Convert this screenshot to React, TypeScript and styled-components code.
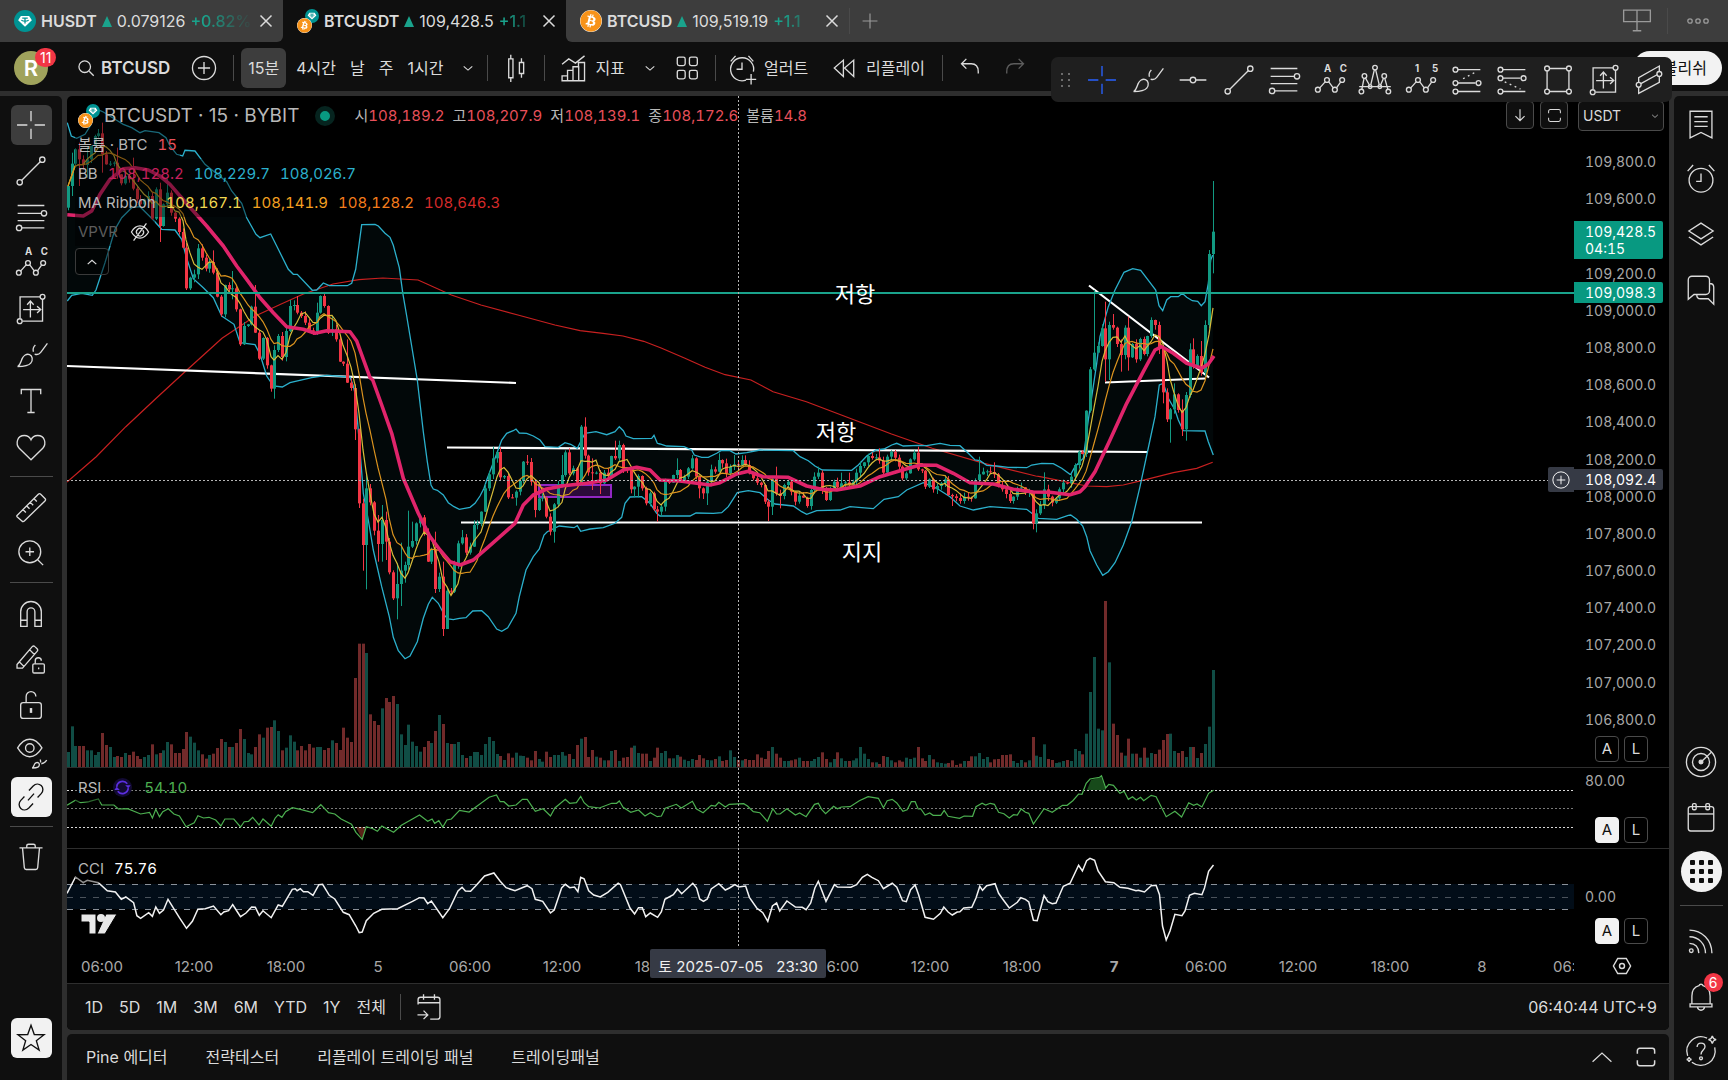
import React from "react";
import styled, { createGlobalStyle, css } from "styled-components";
import { FaBitcoin } from "react-icons/fa6";

const c = {
  tabStrip: "#3d3d3d",
  panel: "#0f0f0f",
  gutter: "#2e2e2e",
  line: "#2e2e2e",
  rule: "#4a4a4a",
  text: "#dbdbdb",
  muted: "#a8a8a8",
  up: "#089981",
  upLine: "#1aa38c",
  down: "#f23645",
  red: "#e8505b",
  cyan: "#2bb0cc",
  badge: "#f23645",
  tip: "#363a45",
};

const GlobalStyle = createGlobalStyle`
  * { box-sizing: border-box; }
  body {
    margin: 0;
    background: ${c.panel};
    color: ${c.text};
    font-family: Inter, "Noto Sans CJK KR", sans-serif;
    font-size: 16px;
    line-height: 20px;
  }
  button, select { font: inherit; color: inherit; }
`;

/* ---------- icons ---------- */

const Svg = styled.svg<{ $size?: number }>`
  width: ${(p) => p.$size ?? 34}px;
  height: ${(p) => p.$size ?? 34}px;
  flex: none;
  display: block;
  fill: none;
  stroke: currentColor;
  stroke-width: 1.1;
  overflow: visible;
`;

const IconLetter = styled.text`
  font: 700 8px Inter, sans-serif;
  fill: currentColor;
  stroke: none;
`;

const icons: Record<string, React.ReactNode> = {
  cross: <path d="M14 2.5V11M14 17v8.5M2.5 14H11M17 14h8.5" />,
  brush: (
    <path d="M3 23.5c2-1 2.6-4 3.7-6.5s3.6-4.3 6.1-3.3 3 4.5 1 7-7.3 2.8-10.8 2.8zM16 11.3c-.7-2.3.2-4.3 1.6-5.6M17 13.2c2.4 1 3.9 0 5-1.4L27.5 4.5" />
  ),
  hline: (
    <>
      <path d="M3 14h8.5M16.5 14H25" />
      <circle cx="14" cy="14" r="2.3" />
    </>
  ),
  trend: (
    <>
      <path d="M6.2 21.8L21.8 6.2" />
      <circle cx="4.7" cy="23.3" r="2.2" />
      <circle cx="23.3" cy="4.7" r="2.2" />
    </>
  ),
  fib: (
    <>
      <path d="M3 4.5h22M3 11h19.5M3 17h22M6.5 23H25" />
      <circle cx="24.7" cy="11" r="2.2" />
      <circle cx="4.2" cy="23" r="2.2" />
    </>
  ),
  abc: (
    <>
      <path d="M5.4 20.7l4.6-5.2M13 15.5l3.5 4.7M19.5 20.2l3.2-4.5" />
      <circle cx="4" cy="22" r="2" />
      <circle cx="11.5" cy="14" r="2" />
      <circle cx="18" cy="22" r="2" />
      <circle cx="24" cy="14" r="2" />
      <IconLetter x="9" y="7">A</IconLetter>
      <IconLetter x="22" y="7">C</IconLetter>
    </>
  ),
  elliott: (
    <>
      <path d="M5.4 20.7l4.6-5.2M13 15.5l3.5 4.7M19.5 20.2l3.2-4.5" />
      <circle cx="4" cy="22" r="2" />
      <circle cx="11.5" cy="14" r="2" />
      <circle cx="18" cy="22" r="2" />
      <circle cx="24" cy="14" r="2" />
      <IconLetter x="9" y="7">1</IconLetter>
      <IconLetter x="23" y="7">5</IconLetter>
    </>
  ),
  xabcd: (
    <>
      <path d="M3.2 21.5L5 12.5M6 12l3.6 6.5M10.5 18L13.5 5.5M14.5 5.5L17.5 18M18.4 18.5l2.6-6M22 12.5l2.5 9M1 19.5h26" />
      <circle cx="14" cy="3.8" r="1.9" />
      <circle cx="5.3" cy="10.7" r="1.9" />
      <circle cx="21.6" cy="10.7" r="1.9" />
      <circle cx="2.8" cy="23.5" r="1.9" />
      <circle cx="25" cy="23.5" r="1.9" />
      <circle cx="10" cy="19.5" r="1.5" />
      <circle cx="18" cy="19.5" r="1.5" />
    </>
  ),
  longPos: (
    <>
      <path d="M6.5 5.5H25M6.5 16.5h14.5M6.5 23.5H25" />
      <path d="M20 8l-12 6.5" strokeDasharray="1.5 3" />
      <circle cx="4.5" cy="5.5" r="2" />
      <circle cx="4.5" cy="16.5" r="2" />
      <circle cx="23.5" cy="16.5" r="2" />
      <circle cx="4.5" cy="23.5" r="2" />
    </>
  ),
  shortPos: (
    <>
      <path d="M6.5 5.5H25M6.5 12.5h14.5M6.5 23.5H25" />
      <path d="M8 15.5l13 6" strokeDasharray="1.5 3" />
      <circle cx="4.5" cy="5.5" r="2" />
      <circle cx="4.5" cy="12.5" r="2" />
      <circle cx="23.5" cy="12.5" r="2" />
      <circle cx="4.5" cy="23.5" r="2" />
    </>
  ),
  rect: (
    <>
      <path d="M7 4.5h14M7 23.5h14M5 6.5v15M23 6.5v15" />
      <circle cx="5" cy="4.5" r="2" />
      <circle cx="23" cy="4.5" r="2" />
      <circle cx="5" cy="23.5" r="2" />
      <circle cx="23" cy="23.5" r="2" />
    </>
  ),
  range: (
    <>
      <path d="M21.5 4H5v17.5M7 24h16.5V6M13.5 21V8M10.8 10.5l2.7-3 2.7 3M7.5 14.5h14M19 11.8l3 2.7-3 2.7" />
      <circle cx="23.5" cy="4" r="2" />
      <circle cx="4.7" cy="24" r="2" />
    </>
  ),
  channel: (
    <>
      <path d="M5.5 16V12L22.5 2.5V7M7.3 17L21 9.5M5.5 20v5l17-9v-5" />
      <circle cx="5.5" cy="18" r="2" />
      <circle cx="22.5" cy="9" r="2" />
    </>
  ),
  text: <path d="M6 8.5V4.5h16v4M14 4.5v19M11 23.5h6" />,
  heart: (
    <path d="M14 24.5L4.3 15C1 11.2 2.6 4.5 8.5 4.5c2.7 0 4.6 1.5 5.5 3.6.9-2.1 2.8-3.6 5.5-3.6 5.9 0 7.5 6.7 4.2 10.5z" />
  ),
  ruler: (
    <path d="M2.5 21L20 3.5c.7-.7 1.3-.7 2 0L25.5 7c.7.7.7 1.3 0 2L8.5 25.5c-.7.7-1.3.7-2 0L2.5 22c-.3-.3-.3-.7 0-1zM7.5 16.2l2.3 2.3M10.5 13.2l2.3 2.3M13.5 10.2l2.3 2.3M16.5 7.2l2.3 2.3" />
  ),
  zoom: (
    <>
      <circle cx="13" cy="13" r="9" />
      <path d="M13 9.5v7M9.5 13h7M19.5 19.5l4.5 4.5" />
    </>
  ),
  magnet: (
    <path d="M5.5 25V13a8.5 8.5 0 0 1 17 0v12h-5.3V13a3.2 3.2 0 0 0-6.4 0v12zM5.5 20h5.3M17.2 20h5.3" />
  ),
  pencilLock: (
    <>
      <path d="M2.5 18.5L15 3.8c.7-.7 1.5-.7 2.2 0l1.8 1.7c.7.7.7 1.5 0 2.2L7 21.5H2.5zM13 6.5l4 4M4.5 16.5l4 4" />
      <rect x="15.5" y="18" width="9.5" height="7.5" rx="1" />
      <path d="M17.5 18v-2.5a2.5 2.5 0 0 1 5 0M20.3 21v1.5" />
    </>
  ),
  lock: (
    <>
      <rect x="5.5" y="12" width="17" height="13" rx="2" />
      <path d="M10 12V7a4 4 0 0 1 8 0" />
      <path d="M14 16.5v4" strokeWidth="2" />
    </>
  ),
  eye: (
    <>
      <path d="M3 11.5C6 6.5 9.5 4.3 13 4.3s7 2.2 10 7.2c-3 5-6.5 7.2-10 7.2S6 16.5 3 11.5z" />
      <circle cx="13" cy="11.5" r="3.5" />
      <path d="M15 28c1-.5 1.3-2 2-3.3s2.3-1.6 3.3-.8.6 2.7-.6 3.4-3 .7-4.7.7zM22 23.5l-.3-2.5M22.5 24.5c2 0 3-1 4.5-3" />
    </>
  ),
  link: (
    <path d="M12.3 8.6l3.5-3.7c2-2 4.8-2 6.6-.3s1.9 4.6 0 6.6l-3 3.2M15.7 19.4l-3.5 3.7c-2 2-4.8 2-6.6.3s-1.9-4.6 0-6.6l3-3.2M16.5 11.2l-5 5.6" />
  ),
  trash: (
    <path d="M4.5 6.5h19M10.5 6.3V5c0-1 .5-1.5 1.5-1.5h4c1 0 1.5.5 1.5 1.5v1.3M7 6.5l1.5 16.3c.1 1 .6 1.5 1.5 1.5h8c.9 0 1.4-.5 1.5-1.5L21 6.5" />
  ),
  star: <path d="M14 3.5l2.7 7.6 8.1.2-6.4 5 2.3 7.7L14 19.4 7.3 24l2.3-7.7-6.4-5 8.1-.2z" />,
  search: (
    <>
      <circle cx="12" cy="12" r="9" strokeWidth="2" />
      <path d="M19 19l7 7" strokeWidth="2" />
    </>
  ),
  plusCircle: (
    <>
      <circle cx="14" cy="14" r="9.5" />
      <path d="M14 9v10M9 14h10" />
    </>
  ),
  chevDown: <path d="M4 10l10 9 10-9" strokeWidth="2.5" />,
  chevUp: <path d="M4 19l10-9 10 9" strokeWidth="3" />,
  chevWide: <path d="M2 20l12-11 12 11" strokeWidth="1.6" />,
  candles: (
    <path d="M8 6.5h3.5v15.5H8zM9.7 3v3.5M9.7 22v3.5M16.8 9.5h3.5v9h-3.5zM18.5 6v3.5M18.5 18.5V22" />
  ),
  indicators: (
    <path d="M5 11l5.5-4.5 5.5 3.5L23.5 4M5 24.5v-4h4.5v-4.5h4.5v-3h4.5v-3.5H23.5v15zM9.5 24.5v-5M14 24.5v-9M18.7 24.5v-12" />
  ),
  layouts: (
    <>
      <rect x="6" y="5" width="6.5" height="7" rx="1.5" />
      <rect x="16" y="5" width="6.5" height="7" rx="1.5" />
      <rect x="6" y="16" width="6.5" height="7" rx="1.5" />
      <rect x="16" y="16" width="6.5" height="7" rx="1.5" />
    </>
  ),
  alertAdd: (
    <path d="M17.3 24a9.5 9.5 0 1 1 6.1-7M14 9.5v5.5h-4.5M4.7 8.5l4-4.5M23.3 8.5l-4-4.5M21.5 19v8.5M17.2 23.3h8.5" />
  ),
  replay: <path d="M13.5 7.5v13.5L6 14zM22 7.5v13.5L14.5 14z" />,
  undo: <path d="M11 6.5L7 10.5l4 4M7.2 10.5H15c3.7 0 5.8 2.5 5.8 6.5v1.5" />,
  redo: <path d="M17 6.5l4 4-4 4M20.8 10.5H13c-3.7 0-5.8 2.5-5.8 6.5v1.5" />,
  close: <path d="M3 3l22 22M25 3L3 25" strokeWidth="3" />,
  plus: <path d="M14 1v26M1 14h26" strokeWidth="2" />,
  boards: <path d="M3 5h22v9.5H3zM14 5v17M10.5 22h7" />,
  more: (
    <>
      <circle cx="6" cy="14" r="2.2" strokeWidth="1.3" />
      <circle cx="14" cy="14" r="2.2" strokeWidth="1.3" />
      <circle cx="22" cy="14" r="2.2" strokeWidth="1.3" />
    </>
  ),
  watchlist: <path d="M5 3.5h18v22l-9-4.5-9 4.5zM8.5 8h11M8.5 12h11M8.5 16h11" />,
  alarm: (
    <>
      <circle cx="14" cy="15" r="9.8" />
      <path d="M14 9.5V16h-4M3 7.5l4.5-5M25 7.5l-4.5-5" />
    </>
  ),
  layers: <path d="M14 5l10 6.5L14 18 4 11.5zM4 16.5L14 23l10-6.5" />,
  chat: (
    <path d="M3.5 19.5v-13a3 3 0 0 1 3-3H18a3 3 0 0 1 3 3v9a3 3 0 0 1-3 3H8.2l-4.7 4zM21 9.5c2 0 3.5.7 3.5 3v14L20 22h-6.5c-2 0-3-1-3-3.3" />
  ),
  target: (
    <>
      <circle cx="14" cy="14" r="12" />
      <circle cx="14" cy="14" r="7" />
      <circle cx="14" cy="14" r="1.5" fill="currentColor" />
      <path d="M14 14l8.5-8" />
    </>
  ),
  calendar: (
    <>
      <rect x="3.5" y="5.5" width="21" height="20" rx="2" />
      <path d="M3.5 11.5h21" />
      <rect x="7" y="3" width="3" height="5" rx="1" />
      <rect x="18" y="3" width="3" height="5" rx="1" />
    </>
  ),
  rss: (
    <>
      <circle cx="6" cy="22" r="1.5" />
      <path d="M4.5 16c4.5.2 7.5 3 7.7 8M4.5 10.5c7.5.2 13 5.5 13.2 13.5M4.5 5c10.5.2 18.3 8 18.5 19" />
    </>
  ),
  bell: <path d="M6.5 20.5V14c0-4.5 2.5-7.5 5.8-8.5a1.8 1.8 0 0 1 3.4 0c3.3 1 5.8 4 5.8 8.5v6.5M5 20.5h18v2.5H5zM11 23c.3 1.7 1.3 2.7 3 2.7s2.7-1 3-2.7" />,
  help: (
    <>
      <path d="M19 3.4A11.8 11.8 0 0 0 3 18M6.5 23.2A11.8 11.8 0 0 0 25.3 11M10.8 10.8c0-2 1.4-3.3 3.2-3.3s3.3 1.2 3.3 3c0 2.7-3.3 2.8-3.3 6.3" />
      <circle cx="14" cy="20" r="1.2" />
      <path d="M23.3 1.5c.4 2 1.2 2.8 3.2 3.2-2 .4-2.8 1.2-3.2 3.2-.4-2-1.2-2.8-3.2-3.2 2-.4 2.8-1.2 3.2-3.2zM4.2 19c.2 1.3.8 1.8 2 2-1.2.2-1.8.8-2 2-.2-1.2-.8-1.8-2-2 1.2-.2 1.8-.7 2-2z" />
    </>
  ),
  gotoDate: (
    <path d="M5 12V8a2 2 0 0 1 2-2h14a2 2 0 0 1 2 2v14a2 2 0 0 1-2 2h-6M5 10.5h18M9.5 3.5V8M18.5 3.5V8M4.5 20.5h8M9.5 17l3.5 3.5L9.5 24" />
  ),
  arrowDown: <path d="M14 4v20M6 16l8 8 8-8" strokeWidth="2" />,
  maximize: <path d="M3 10V6a3 3 0 0 1 3-3h16a3 3 0 0 1 3 3v4M3 18v4a3 3 0 0 0 3 3h16a3 3 0 0 0 3-3v-4" strokeWidth="1.9" />,
  hidden: (
    <path d="M2 14c3.5-6 7.5-8.5 12-8.5S22.5 8 26 14c-3.5 6-7.5 8.5-12 8.5S5.5 20 2 14zM10 17a5 5 0 0 1 7-7M18 11.5a5 5 0 0 1-7 7M5 26L23 2" strokeWidth="1.8" />
  ),
  hex: (
    <>
      <path d="M8 3.5h12L26 14l-6 10.5H8L2 14z" strokeWidth="2" />
      <circle cx="14" cy="14" r="3.5" strokeWidth="2" />
    </>
  ),
  sync: (
    <>
      <circle cx="14" cy="14" r="14" fill="#120a33" stroke="none" />
      <path d="M5.5 13a8.6 8.6 0 0 1 15.5-4.5M22.5 15a8.6 8.6 0 0 1-15.5 4.5" strokeWidth="2.4" />
      <path d="M18 10.5h8l-3.5 4.5zM10 17.5H2l3.5-4.5z" fill="currentColor" stroke="none" />
    </>
  ),
};

const Icon = ({ name, size }: { name: string; size?: number }) => (
  <Svg viewBox="0 0 28 28" $size={size} aria-hidden="true">
    {icons[name]}
  </Svg>
);

/* ---------- coins ---------- */

const CoinDisc = styled.span<{ $size: number; $bg: string }>`
  display: block;
  flex: none;
  width: ${(p) => p.$size}px;
  height: ${(p) => p.$size}px;
  border-radius: 50%;
  overflow: hidden;
  background: ${(p) => p.$bg};
  color: #f7931a;
  & > svg { display: block; width: 100%; height: 100%; }
`;

const Tether = ({ size }: { size: number }) => (
  <CoinDisc $size={size} $bg="#009393">
    <svg viewBox="0 0 24 24">
      <path d="M7.5 6.5h9l3 4.7-7.5 7-7.5-7z" fill="#fff" />
      <path d="M9 8.8h6M12 8.8v6M8 11.2c2 1 6 1 8 0" stroke="#009393" strokeWidth="1.4" fill="none" />
    </svg>
  </CoinDisc>
);

const Bitcoin = ({ size }: { size: number }) => (
  <CoinDisc $size={size} $bg="#fff">
    <FaBitcoin />
  </CoinDisc>
);

const PairBox = styled.span`
  display: grid;
  flex: none;
  width: 22px;
  height: 24px;
  & > :first-child { grid-area: 1 / 1; justify-self: end; align-self: start; }
  & > :last-child { grid-area: 1 / 1; justify-self: start; align-self: end; }
`;

const Pair = () => (
  <PairBox>
    <Tether size={14} />
    <Bitcoin size={15} />
  </PairBox>
);

/* ---------- page frame ---------- */

const Page = styled.div`
  display: flex;
  flex-direction: column;
  min-height: 100vh;
  overflow: hidden;
`;

const bareButton = css`
  display: flex;
  align-items: center;
  justify-content: center;
  padding: 0;
  border: 0;
  background: none;
  cursor: pointer;
  white-space: nowrap;
`;

const TabStrip = styled.nav`
  display: flex;
  height: 42px;
  background: ${c.panel};
`;

const Tab = styled.div<{ $active?: boolean; $edge?: "left" | "right" }>`
  display: flex;
  align-items: center;
  gap: 5px;
  flex: 0 0 283px;
  min-width: 0;
  padding: 0 10px 0 14px;
  background: ${(p) => (p.$active ? c.panel : c.tabStrip)};
  border-radius: ${(p) => (p.$edge === "left" ? "0 0 6px 0" : p.$edge === "right" ? "0 0 0 6px" : "0")};
`;

const TabSymbol = styled.span`
  font-weight: 600;
`;

const Rise = styled.span`
  flex: none;
  border: 5px solid transparent;
  border-top: 0;
  border-bottom: 11px solid ${c.upLine};
`;

const TabChange = styled.span`
  flex: 1;
  min-width: 0;
  overflow: hidden;
  white-space: nowrap;
  color: ${c.upLine};
  font-weight: 500;
  mask-image: linear-gradient(90deg, #000 20%, transparent);
`;

const TabClose = styled.button`
  ${bareButton}
  width: 14px;
  height: 24px;
`;

const StripRest = styled.div`
  display: flex;
  flex: 1;
  align-items: center;
  background: ${c.tabStrip};
  color: #9a9a9a;
`;

const StripButton = styled.button<{ $w: number }>`
  ${bareButton}
  width: ${(p) => p.$w}px;
  height: 34px;
`;

const Rule = styled.span<{ $l?: number; $r?: number }>`
  flex: none;
  width: 1px;
  height: 26px;
  margin: 0 ${(p) => p.$r ?? 0}px 0 ${(p) => p.$l ?? 0}px;
  background: ${c.rule};
`;

const Spacer = styled.span`
  flex: 1;
`;

const TopBar = styled.header`
  position: relative;
  display: flex;
  align-items: center;
  height: 49px;
  padding: 3px 6px 0 14px;
  background: ${c.panel};
`;

const Avatar = styled.button`
  ${bareButton}
  position: relative;
  width: 34px;
  height: 34px;
  border-radius: 50%;
  background: #a0a35c;
  color: #fff;
  font-size: 22px;
  font-weight: 600;
`;

const Badge = styled.span<{ $x: number; $y: number }>`
  position: absolute;
  left: ${(p) => p.$x}px;
  top: ${(p) => p.$y}px;
  min-width: 19px;
  padding: 0 5px;
  border-radius: 10px;
  background: ${c.badge};
  color: #fff;
  font-size: 14px;
  font-weight: 400;
  line-height: 19px;
  text-align: center;
`;

const SearchButton = styled.button`
  ${bareButton}
  gap: 6px;
  padding: 0 17px 0 29px;
  font-size: 17px;
  font-weight: 600;
`;

const Tool = styled.button<{ $l?: number; $dim?: boolean }>`
  ${bareButton}
  gap: 5px;
  height: 40px;
  margin-left: ${(p) => p.$l ?? 0}px;
  color: ${(p) => (p.$dim ? "#5d5d5d" : c.text)};
`;

const Interval = styled.button<{ $on?: boolean }>`
  ${bareButton}
  height: 40px;
  padding: 0 7px;
  margin-right: ${(p) => (p.$on ? 3 : 0)}px;
  border-radius: 6px;
  background: ${(p) => (p.$on ? "#3d3d3d" : "none")};
`;

const Publish = styled.button`
  ${bareButton}
  height: 34px;
  padding: 0 15px;
  border-radius: 17px;
  background: #f2f2f2;
  color: #0f0f0f;
`;

const Favorites = styled.div`
  position: absolute;
  z-index: 5;
  right: 56px;
  top: 15px;
  display: flex;
  align-items: center;
  width: 621px;
  height: 45px;
  padding: 0 0 0 10px;
  border-radius: 7px;
  background: #1f1f1f;
`;

const Grip = styled.span`
  display: grid;
  grid-template-columns: 2px 2px;
  gap: 4px 5px;
  margin-right: 9px;
  & > i { width: 2px; height: 2px; background: #6b6b6b; }
`;

const FavButton = styled.button<{ $on?: boolean }>`
  ${bareButton}
  flex: 1;
  height: 40px;
  color: ${(p) => (p.$on ? "#2962ff" : c.text)};
`;

const Body = styled.main`
  display: flex;
  flex: 1;
  gap: 5px;
  padding-top: 5px;
  background: ${c.gutter};
`;

const LeftRail = styled.aside`
  display: flex;
  flex-direction: column;
  align-items: center;
  width: 62px;
  padding: 6px 0 19px;
  border-radius: 0 5px 0 0;
  background: ${c.panel};
`;

const RailButton = styled.button<{ $look?: "on" | "light" }>`
  ${bareButton}
  width: 41px;
  height: 40px;
  margin: 3px 0;
  border-radius: 6px;
  background: ${(p) => (p.$look === "on" ? "#3d3d3d" : p.$look === "light" ? "#f2f2f2" : "none")};
  color: ${(p) => (p.$look === "light" ? "#0f0f0f" : c.text)};
`;

const RailRule = styled.hr`
  width: 43px;
  height: 1px;
  margin: 6px 0 7px;
  border: 0;
  background: ${c.rule};
`;

const RightRail = styled.aside`
  display: flex;
  flex-direction: column;
  align-items: center;
  width: 54px;
  padding: 0 0 2px;
  border-radius: 5px 0 0 0;
  background: ${c.panel};
`;

const SideButton = styled.button<{ $disc?: boolean }>`
  ${bareButton}
  position: relative;
  width: 41px;
  height: 41px;
  margin: 7px 0;
  border-radius: 50%;
  background: ${(p) => (p.$disc ? "#f2f2f2" : "none")};
`;

const AppDots = styled.span`
  display: grid;
  grid-template-columns: repeat(3, 5px);
  gap: 4px;
  & > i { height: 5px; border-radius: 1px; background: #0f0f0f; }
`;

const Center = styled.div`
  display: flex;
  flex: 1;
  flex-direction: column;
  gap: 4px;
  min-width: 0;
`;

const ChartCard = styled.section`
  display: flex;
  flex: 1;
  flex-direction: column;
  border-radius: 5px;
  overflow: hidden;
  background: #000;
`;

const Panes = styled.div`
  position: relative;
  display: flex;
  flex: 1;
  flex-direction: column;
`;

const Pane = styled.div<{ $h?: number }>`
  display: flex;
  flex: ${(p) => (p.$h ? `0 0 ${p.$h}px` : "1 0 671px")};
  border-top: ${(p) => (p.$h ? `1px solid ${c.line}` : "0")};
`;

const Plot = styled.div`
  position: relative;
  flex: 1;
  min-width: 0;
  overflow: hidden;
`;

const Drawing = styled.svg`
  display: block;
  position: absolute;
  inset: 0;
  width: 100%;
  height: 100%;
`;

const Note = styled.text`
  fill: #fff;
  font: 22px Inter, "Noto Sans CJK KR", sans-serif;
  text-anchor: middle;
`;

const Axis = styled.div`
  position: relative;
  flex: 0 0 95px;
  padding-left: 11px;
  color: ${c.muted};
  font-size: 14px;
  font-variant-numeric: tabular-nums;
`;

const PriceAxis = styled(Axis)`
  display: flex;
  flex-direction: column;
  justify-content: space-between;
  padding: 56px 0 37px 11px;
`;

const AxisLabel = styled.span`
  height: 20px;
`;

const StudyLabel = styled.div<{ $top: number }>`
  padding-top: ${(p) => p.$top}px;
`;

const PriceTag = styled.div<{ $top: number; $bg?: string }>`
  position: absolute;
  left: 0;
  top: ${(p) => p.$top}px;
  width: 89px;
  padding: 2px 11px;
  border-radius: 0 2px 2px 0;
  background: ${(p) => p.$bg ?? c.up};
  color: #fff;
  line-height: 17px;
`;

const PlusTag = styled.button`
  ${bareButton}
  position: absolute;
  right: 0;
  top: 371px;
  width: 26px;
  height: 25px;
  border-radius: 2px 0 0 2px;
  background: ${c.tip};
  color: #fff;
`;

const ScaleButtons = styled.div`
  position: absolute;
  left: 21px;
  bottom: 5px;
  display: flex;
  gap: 5px;
`;

const ScaleButton = styled.button<{ $on?: boolean }>`
  ${bareButton}
  width: 24px;
  height: 26px;
  border: 1px solid ${(p) => (p.$on ? "#f2f2f2" : "#4a4a4a")};
  border-radius: 4px;
  background: ${(p) => (p.$on ? "#f2f2f2" : "#000")};
  color: ${(p) => (p.$on ? "#0f0f0f" : c.text)};
  font-size: 15px;
`;

const CornerTools = styled.div`
  position: absolute;
  z-index: 2;
  top: 5px;
  right: 5px;
  display: flex;
  align-items: flex-start;
  gap: 6px;
`;

const CornerButton = styled.button`
  ${bareButton}
  width: 28px;
  height: 28px;
  border: 1px solid #4a4a4a;
  border-radius: 4px;
  background: ${c.panel};
`;

const Currency = styled.label`
  display: grid;
  align-items: center;
  width: 86px;
  margin-left: 4px;
  & > select {
    grid-area: 1 / 1;
    width: 100%;
    height: 30px;
    padding: 0 4px;
    border: 1px solid #4a4a4a;
    border-radius: 4px;
    background: ${c.panel};
    appearance: none;
    font-size: 14px;
  }
  & > svg { grid-area: 1 / 1; justify-self: end; margin-right: 5px; pointer-events: none; }
`;

const Legend = styled.div`
  position: absolute;
  left: 8px;
  top: 5px;
  display: flex;
  flex-direction: column;
  align-items: flex-start;
`;

const LegendRow = styled.div<{ $big?: boolean }>`
  display: flex;
  align-items: center;
  height: 29px;
  padding: 0 3px;
  gap: ${(p) => (p.$big ? 4 : 10)}px;
  background: rgba(0, 0, 0, 0.4);
  color: #b8b8b8;
  font-size: 15px;
  white-space: nowrap;
`;

const SymbolTitle = styled.h1`
  margin: 0;
  font-size: 19px;
  font-weight: 400;
`;

const Live = styled.span`
  width: 20px;
  height: 20px;
  margin: 0 15px 0 12px;
  border: 5px solid #06241f;
  border-radius: 50%;
  background: ${c.up};
`;

const Ohlc = styled.span`
  display: flex;
  gap: 8px;
`;

const Value = styled.span<{ $color: string }>`
  color: ${(p) => p.$color};
  font-variant-numeric: tabular-nums;
`;

const Faint = styled.span`
  color: #5d5d5d;
`;

const IconSlot = styled.span<{ $color?: string }>`
  display: flex;
  margin: 0 2px;
  color: ${(p) => p.$color ?? c.text};
`;

const Collapse = styled.button`
  ${bareButton}
  width: 34px;
  height: 27px;
  margin-top: 2px;
  border: 1px solid #3a3a3a;
  border-radius: 4px;
  background: rgba(0, 0, 0, 0.5);
`;

const StudyLegend = styled(LegendRow)`
  position: absolute;
  left: 8px;
  top: 5px;
`;

const Brand = styled.svg`
  position: absolute;
  left: 14px;
  bottom: 14px;
  width: 37px;
  height: 22px;
`;

const CrossV = styled.div`
  position: absolute;
  left: 671px;
  top: 0;
  bottom: 36px;
  width: 1px;
  background: repeating-linear-gradient(180deg, #b5b5b5 0 2px, transparent 2px 4px);
  pointer-events: none;
`;

const TimeRow = styled.div`
  position: relative;
  display: flex;
  height: 34px;
`;

const TimeLabels = styled.div`
  display: flex;
  flex: 1;
  min-width: 0;
  overflow: hidden;
  align-items: center;
  padding-top: 2px;
  color: ${c.muted};
  font-size: 15px;
`;

const TimeLabel = styled.span<{ $bold?: boolean }>`
  flex: none;
  width: 92px;
  text-align: center;
  font-weight: ${(p) => (p.$bold ? 700 : 400)};
  &:first-child { margin-left: -11px; }
`;

const TimeTip = styled.div`
  position: absolute;
  left: 583px;
  top: 0;
  display: flex;
  justify-content: center;
  gap: 13px;
  width: 176px;
  height: 29px;
  border-radius: 2px;
  background: ${c.tip};
  color: #f0f0f0;
  font-size: 15px;
  line-height: 35px;
`;

const TimeSettings = styled.button`
  ${bareButton}
  flex: 0 0 95px;
`;

const RangeBar = styled.div`
  display: flex;
  align-items: center;
  height: 47px;
  padding: 0 12px 0 10px;
  border-top: 1px solid ${c.line};
  background: ${c.panel};
`;

const RangeButton = styled.button`
  ${bareButton}
  height: 34px;
  padding: 0 8px;
`;

const BottomPanel = styled.footer`
  display: flex;
  align-items: center;
  gap: 38px;
  height: 46px;
  padding: 0 12px 0 19px;
  border-radius: 5px 5px 0 0;
  background: ${c.panel};
`;

const PanelButton = styled.button`
  ${bareButton}
`;

const PanelActions = styled.div`
  display: flex;
  gap: 22px;
`;

/* ---------- market data ---------- */

type Block = { base: number; close: number[]; wick: Record<number, [number | null, number | null]> };

/* Closing levels, three units to a pixel, measured downward from each block's base. */
const blocks: Block[] = [
  {
    base: 0,
    close: [
      270, 203, 160, 190, 207, 190, 150, 120, 112, 175, 205, 203, 200, 235, 262, 240, 250, 278, 310, 325, 310, 300, 368,
      280, 390, 325, 290, 350, 368, 408, 455, 577, 545, 535, 457, 485, 518, 498, 530, 602, 655, 567, 580, 577, 640, 745,
      690, 685, 632, 710, 788, 726, 808, 878, 762, 720, 783, 705, 630, 627, 650, 660, 680, 703, 705, 650, 600, 630, 710,
      700, 730, 797, 803, 860, 876,
    ],
    wick: {
      1: [170, 300], 3: [140, 270], 5: [150, 245], 9: [80, 230], 13: [155, null], 17: [185, null], 22: [null, 372],
      24: [260, 438], 26: [248, null], 38: [463, null], 43: [525, 610], 49: [567, null], 54: [null, 908], 58: [612, null],
      60: [600, null], 65: [620, null], 67: [592, null], 69: [660, null], 73: [730, null],
    },
  },
  {
    base: 852,
    close: [
      148, 370, 495, 325, 367, 452, 492, 420, 485, 577, 655, 612, 572, 555, 500, 483, 430, 412, 458, 545, 508, 627, 590,
      747, 632, 635, 555, 490, 472, 518, 500, 435, 430, 395, 325, 283, 235, 216, 292, 288, 352, 353, 335, 303, 245, 246,
      305, 390, 355, 353, 410, 455, 373, 312, 285, 217, 280, 265, 308, 140, 227, 277, 280, 278, 310, 278, 288, 228, 235,
      195, 265, 270, 328, 320, 288, 325, 370, 340, 388, 395,
    ],
    wick: {
      75: [null, 180], 77: [null, 572], 78: [282, 628], 81: [405, 545], 82: [375, 545], 83: [395, 540], 86: [550, 718],
      87: [488, 678], 88: [545, 608], 89: [392, null], 90: [425, null], 96: [455, null], 98: [545, 768], 99: [625, 747],
      103: [450, null], 111: [200, null], 117: [null, 377], 120: [225, null], 122: [null, 412], 127: [null, 488],
      129: [225, null], 131: [205, null], 135: [112, null], 137: [235, 330], 139: [270, 342], 143: [182, null],
      144: [182, null], 148: [null, 352], 149: [null, 352], 154: [null, 425],
    },
  },
  {
    base: 1002,
    close: [
      230, 155, 158, 135, 120, 150, 140, 115, 85, 140, 175, 190, 155, 118, 125, 90, 100, 130, 110, 103, 105, 90, 105, 130,
      145, 158, 165, 215, 230, 146, 190, 198, 165, 155, 185, 215, 197, 203, 228, 180, 140, 128, 180, 210, 175, 155, 172,
      160, 157, 165, 155, 128, 108, 97, 78, 84, 82, 92, 128, 80, 66, 83, 110, 145, 130, 88, 68, 118, 122, 170, 148, 178,
      168, 160, 148, 195, 199, 204, 213, 200, 203, 205, 150, 133, 125, 124, 126, 133, 168, 178, 192, 213, 200, 175, 172,
      188, 186, 280, 250, 225, 178, 200, 218, 205, 178, 158, 160, 140, 105, 65, 72,
    ],
    wick: {
      159: [85, null], 165: [null, 205], 166: [null, 207], 167: [null, 225], 170: [70, null], 174: [75, null],
      183: [null, 273], 184: [null, 255], 185: [110, null], 186: [null, 235], 196: [110, null], 202: [128, null],
      204: [128, null], 212: [55, null], 222: [50, null], 231: [null, 228], 238: [80, null], 242: [97, null],
      252: [null, 298], 253: [null, 307], 255: [127, null],
    },
  },
  {
    base: 432,
    close: [
      512, 388, 338, 318, 265, 358, 255, 263, 312, 345, 263, 352, 312, 358, 297, 342, 288, 240, 255, 325, 457, 538, 508,
      463, 510, 568, 465, 328, 378, 348, 398, 255, 42, -25,
    ],
    wick: {
      268: [150, null], 271: [185, 425], 272: [245, 420], 273: [222, null], 275: [null, 395], 277: [230, 392],
      285: [245, 342], 286: [null, 490], 288: [null, 608], 289: [430, null], 291: [478, 588], 292: [null, 602],
      293: [310, null], 294: [295, null], 296: [303, null], 298: [30, null], 299: [-177, 100],
    },
  },
];

/* Volume bar heights, three units to a pixel. */
const volumes = [
  45, 122, 63, 63, 63, 50, 50, 36, 45, 102, 66, 60, 30, 33, 30, 42, 36, 46, 33, 24, 30, 36, 68, 38, 42, 50, 75, 68, 42, 42,
  54, 105, 91, 73, 50, 38, 25, 36, 40, 57, 84, 75, 60, 60, 72, 114, 84, 42, 38, 60, 98, 88, 118, 120, 140, 108, 50, 58, 95,
  76, 50, 63, 50, 69, 58, 60, 60, 51, 57, 80, 72, 51, 118, 88, 75, 267, 370, 370, 342, 158, 138, 126, 176, 207, 195, 213,
  189, 98, 66, 127, 76, 63, 46, 60, 78, 72, 108, 156, 129, 72, 69, 69, 75, 36, 27, 33, 45, 45, 36, 69, 90, 78, 39, 33, 21,
  41, 28, 43, 34, 33, 28, 20, 48, 24, 16, 46, 30, 36, 36, 45, 34, 39, 24, 66, 85, 90, 30, 51, 31, 28, 20, 20, 48, 51, 18,
  28, 30, 58, 64, 42, 40, 40, 18, 28, 58, 42, 48, 26, 26, 36, 31, 22, 18, 24, 21, 36, 26, 21, 20, 24, 32, 18, 21, 50, 30,
  21, 20, 24, 21, 21, 38, 28, 24, 48, 60, 40, 28, 18, 18, 20, 23, 28, 18, 18, 18, 24, 30, 44, 24, 14, 24, 44, 26, 18, 18,
  20, 26, 60, 40, 24, 14, 14, 9, 33, 30, 20, 14, 20, 16, 28, 24, 28, 60, 26, 18, 36, 23, 14, 12, 10, 12, 20, 6, 10, 18,
  18, 32, 32, 42, 24, 30, 14, 23, 24, 36, 36, 38, 18, 12, 21, 14, 20, 90, 34, 30, 68, 24, 21, 12, 14, 18, 21, 18, 54, 48,
  38, 100, 225, 330, 115, 110, 498, 314, 130, 96, 43, 34, 85, 40, 40, 28, 58, 28, 42, 39, 52, 81, 99, 100, 48, 42, 48, 30,
  60, 60, 27, 42, 69, 121, 291,
];

const STEP = 3.829;
const barX = (i: number) => Math.round(0.7 + STEP * i);

type Candle = { x: number; open: number; close: number; high: number; low: number; up: boolean };

const candles: Candle[] = [];
{
  let prev = 335;
  let seed = 7;
  const jitter = () => {
    seed = (seed * 16807) % 2147483647;
    return (seed % 14) + 1;
  };
  blocks.forEach(({ base, close, wick }) => {
    close.forEach((v) => {
      const i = candles.length;
      const end = v + base;
      const [hi, lo] = wick[i] ?? [null, null];
      const top = Math.min(prev, end);
      const bottom = Math.max(prev, end);
      candles.push({
        x: barX(i),
        open: prev / 3,
        close: end / 3,
        high: (hi === null ? top - jitter() : Math.min(top, hi + base)) / 3,
        low: (lo === null ? bottom + jitter() : Math.max(bottom, lo + base)) / 3,
        up: end < prev,
      });
      prev = end;
    });
  });
}

const average = (n: number) =>
  candles
    .map((k, i) => {
      const from = Math.max(0, i - n + 1);
      const win = candles.slice(from, i + 1);
      return `${k.x},${(win.reduce((s, w) => s + w.close, 0) / win.length).toFixed(1)}`;
    })
    .join(" ");

/* A run of points on its own grid: origin, horizontal units per pixel, then x,y pairs. */
type Run = { x: number; y: number; sx: number; pts: string };

const trace = (runs: Run[]) =>
  runs
    .flatMap(({ x, y, sx, pts }) =>
      pts.split(" ").map((p) => {
        const [a, b] = p.split(",").map(Number);
        return `${(x + a / sx).toFixed(1)},${(y + b / 3).toFixed(1)}`;
      })
    )
    .join(" ");

const A = { x: -7, y: 0, sx: 3 };
const B = { x: 273, y: 284, sx: 3 };
const C = { x: 593, y: 334, sx: 3 };
const D = { x: 973, y: 144, sx: 3 };

const bbUpper = trace([
  { ...A, pts: "22,80 34,120 50,127 75,115 92,88 103,50 112,40 130,48 165,70 190,85 215,95 240,110 255,104 297,110 318,125 330,150 350,175 368,180 375,163 405,165 435,205 460,225 500,257 515,285 545,322 560,365 588,415 600,425 632,414 650,450 685,520 700,535 712,535 757,583 770,582 790,561 808,569 862,569 875,562 887,520 905,386 945,385 955,390 975,412 990,424 1000,448 1018,515 1028,590 1040,660" },
  { ...B, pts: "232,0 250,155 262,245 273,315 280,327 292,331 310,345 325,368 342,380 358,388 390,382 405,370 420,348 432,325 440,300 465,235 485,180 500,160 520,152 528,147 538,159 560,160 580,168 600,180 615,200 655,202 675,188 692,193 712,205 735,160 768,155 800,164 825,155 838,140 850,152 858,168 880,176 935,175 942,166 952,190" },
  { ...C, pts: "0,42 20,48 72,50 95,60 103,75 125,82 145,82 170,70 183,62 210,62 228,72 260,68 300,60 400,62 420,80 445,92 465,108 487,120 575,121 595,105 620,78 648,60 672,57 695,45 710,40 730,48 775,46 800,47 840,40 870,46 900,47 925,70 945,90 960,92 980,106 1010,108 1045,112 1100,113 1115,105 1145,100 1180,101 1205,115 1230,133" },
  { ...D, pts: "92,703 105,680 130,655 145,540 170,370 180,290 205,200 225,150 252,97 278,86 302,91 328,125 347,150 357,197 368,212 380,180 392,170 415,170 427,160 440,172 457,182 473,184 484,197 495,185 505,130 512,60 518,45" },
]);

const bbLower = trace([
  { ...A, pts: "22,615 35,598 65,592 97,598 108,582 135,500 150,450 165,400 185,365 215,335 240,332 280,372 305,400 345,402 365,430 378,480 400,548 430,575 460,605 485,660 522,685 540,740 585,746 600,775 620,840 640,870 667,873 690,860 755,845 800,838 828,840 870,843 880,870" },
  { ...B, pts: "45,40 60,210 70,340 85,420 100,510 125,620 148,710 160,772 175,812 195,836 210,828 232,785 250,715 265,673 277,652 295,670 315,708 325,717 340,719 358,715 378,713 398,693 425,692 445,710 470,747 485,754 503,743 528,700 538,650 558,570 580,530 598,507 612,465 622,455 658,438 702,443 712,437 722,454 750,447 790,443 825,430 845,412 855,370 870,351 905,350 930,370 950,400" },
  { ...C, pts: "0,258 90,258 108,249 160,250 185,248 205,230 232,188 265,182 300,188 325,210 345,222 400,228 425,245 440,253 470,242 540,240 570,230 640,236 672,208 715,200 740,180 790,158 830,175 870,200 900,228 940,240 990,230 1100,238 1135,265 1190,268 1225,256" },
  { ...D, pts: "92,825 110,838 128,858 140,890 150,932 170,975 188,1006 205,995 225,968 250,915 275,845 300,740 330,600 345,530 358,435 370,430 385,475 405,510 415,540 430,572 495,573 505,605 520,645" },
]);

const bbArea = `${bbUpper} ${bbLower.split(" ").reverse().join(" ")}`;

const bbBasis = trace([
  { ...A, pts: "22,356 70,360 95,345 120,295 150,250 190,218 225,215 265,222 300,240 330,265 360,300 400,345 440,390 490,450 530,510 560,550 600,605 640,650 680,692 730,700 765,712 800,704 870,707 890,735 930,845" },
  { ...B, pts: "98,0 125,75 155,160 190,295 235,400 270,470 300,510 330,545 360,555 400,540 440,505 480,470 525,430 550,375 580,345 620,327 670,317 740,310 800,300 850,270 890,262 930,270" },
  { ...C, pts: "0,150 60,153 110,160 150,165 180,158 230,132 265,124 310,140 385,142 440,168 485,178 530,180 600,168 660,140 720,122 780,105 830,106 880,130 930,158 1000,162 1060,178 1120,186 1170,187 1230,194 1260,185" },
  { ...D, pts: "135,740 165,695 210,600 260,490 310,395 345,330 365,320 400,340 440,370 485,385 505,372 522,348" },
]);

const ma200 = trace([
  { x: -67, y: 184, sx: 2.703, pts: "181,606 260,530 340,440 420,357 500,275 600,175 690,108 760,72 820,42 900,12 970,-1 1035,-6 1130,0 1220,45 1300,75 1400,105 1500,135 1568,152 1630,160 1684,168 1740,184 1787,204 1850,234 1906,262 1960,284" },
  { x: 473, y: 284, sx: 2.703, pts: "570,0 630,35 720,65 850,120 950,162 1060,205 1200,250 1340,288" },
  { ...D, pts: "0,710 60,722 140,738 200,740 250,735 320,718 400,698 470,685 518,667" },
]);

const rsiLine = trace([
  { x: -67, y: -148, sx: 2.703, pts: "181,556 204,541 218,548 240,545 266,537 275,555 308,555 320,567 345,566 380,582 404,577 412,594 421,568 431,590 440,575 455,566 470,582 485,588 503,620 525,608 535,587 550,594 565,592 583,600 597,618 608,597 632,597 650,621 660,605 672,604 683,592 700,615 711,597 733,619 744,594 752,584 762,592 772,575 790,563 812,568 845,578 867,554 888,578 905,582 922,597 950,613 962,637 979,658 990,620 1008,626 1020,634 1032,618 1064,637 1085,616 1110,600 1134,585 1156,604 1168,597 1175,610 1186,602 1197,621 1208,600 1220,597 1242,571 1268,576 1290,558 1322,532 1342,525 1352,545 1362,545 1375,558 1395,555 1412,538 1425,538 1447,574 1468,566 1488,588 1500,564 1528,538 1540,550 1558,548" },
  { x: 493, y: -28, sx: 2.613, pts: "54,169 63,188 75,200 103,204 135,190 148,190 155,183 165,202 185,217 205,210 222,228 236,218 254,230 265,228 275,205 304,193 317,204 346,184 357,207 374,218 395,196 406,198 415,187 432,201 442,193 480,191 490,198 505,215 522,218 542,244 556,206 566,222 575,222 593,206 615,225 626,219 643,230 665,193 675,190 684,209 694,221 715,199 725,206 735,201 758,200 782,182 805,170 832,175 845,203 855,182 868,178 880,189 896,214 907,209 918,185 928,185 936,207 943,207 954,225 966,219 975,226 995,226 1004,211 1014,229 1044,235 1056,228 1078,229 1087,200 1103,190 1112,195 1124,190 1135,193 1146,217 1160,221 1174,234 1185,224 1195,225 1205,207 1216,217 1225,220 1237,252 1265,206 1286,217 1313,196 1325,196 1340,182 1355,162 1364,163 1375,130 1385,117 1410,112 1415,107 1426,144 1434,133 1446,136 1463,160 1474,154 1485,178 1496,170 1506,180 1517,172" },
  { x: 1073, y: -188, sx: 2.667, pts: "10,662 30,646 43,650 70,710 93,694 111,711 130,668 143,676 152,672 165,681 183,640 196,631" },
]);

const cciLine = trace([
  { x: -67, y: -229, sx: 2.703, pts: "181,820 204,771 225,788 236,781 266,788 290,812 312,816 328,838 340,831 361,848 370,887 380,895 402,878 412,889 421,861 431,880 442,870 454,838 485,893 504,925 520,904 535,868 555,866 577,858 597,884 605,876 618,872 629,854 640,873 650,890 665,879 680,861 690,862 701,886 711,872 733,893 752,855 763,859 790,808 798,806 803,812 812,806 820,815 832,815 846,826 862,794 872,793 890,826 905,837 928,877 944,884 962,918 971,938 979,936 990,902 1010,880 1032,868 1075,866 1115,844 1134,833 1146,834 1156,851 1166,843 1197,893 1215,866 1238,813 1249,802 1258,813 1272,814 1288,795 1310,768 1335,759 1352,784 1368,803 1392,812 1425,797 1438,806 1447,838 1467,844 1488,879 1498,870 1518,804 1528,793 1540,803 1553,801 1562,815" },
  { x: 493, y: -109, sx: 2.613, pts: "54,412 63,416 75,452 88,465 105,471 125,457 152,430 158,434 183,504 195,522 205,503 215,503 224,530 236,519 255,532 265,515 274,478 296,464 307,447 318,461 347,430 357,444 365,477 375,484 385,477 395,447 415,431 432,450 443,444 457,434 467,441 485,438 495,472 514,504 530,518 543,544 555,498 566,489 574,513 593,483 615,501 633,502 643,509 655,489 666,444 675,424 695,484 717,434 725,441 760,442 775,434 790,412 803,403 815,412 832,422 845,446 868,430 880,442 895,482 905,485 916,449 928,435 937,464 954,532 976,538 994,520 1003,501 1014,516 1025,525 1038,516 1045,515 1055,504 1076,502 1087,474 1097,439 1104,451 1115,437 1137,431 1146,460 1160,482 1174,504 1195,487 1204,473 1216,478 1225,486 1237,541 1247,542 1265,467 1275,485 1286,491 1296,489 1315,439 1333,430 1355,376 1365,393 1376,362 1385,355 1397,361 1406,393 1425,425 1447,428 1463,442 1484,445 1505,452 1511,451" },
  { x: 1073, y: -269, sx: 2.667, pts: "0,932 12,936 30,917 43,916 52,944 60,1038 70,1080 80,1053 93,1003 112,1007 120,993 132,946 145,940 165,944 172,924 183,874 196,855" },
]);

const prices = [
  "109,800.0", "109,600.0", "", "109,200.0", "109,000.0", "108,800.0", "108,600.0", "108,400.0", "108,200.0", "108,000.0",
  "107,800.0", "107,600.0", "107,400.0", "107,200.0", "107,000.0", "106,800.0",
];

const times = [
  "06:00", "12:00", "18:00", "5", "06:00", "12:00", "18:00", "", "06:00", "12:00", "18:00", "7", "06:00", "12:00", "18:00",
  "8", "06:00",
];

/* ---------- charts ---------- */

const PriceChart = () => (
  <Drawing viewBox="0 0 1507 671" preserveAspectRatio="none" role="img" aria-label="BTCUSDT">
    <polygon points={bbArea} fill="#2bb0cc" opacity="0.045" />
    {candles.map((k, i) => (
      <rect key={i} x={k.x - 1} y={671 - volumes[i] / 3} width="3" height={volumes[i] / 3} fill={k.up ? "#104d45" : "#712a2a"} />
    ))}
    <polyline points={ma200} fill="none" stroke="#c82020" strokeWidth="1.2" />
    <g stroke="#fff" strokeWidth="2.2">
      <path d="M0 270L449 287M380 351.5L1081 356M394 426.5H1135M1022 189.5L1142 281.5M1038 286.5L1138 282.5" fill="none" />
    </g>
    <rect x="472" y="389" width="72" height="12" fill="#2c0a3a" stroke="#9127c2" strokeWidth="2" />
    <polyline points={bbUpper} fill="none" stroke={c.cyan} strokeWidth="1.3" />
    <polyline points={bbLower} fill="none" stroke={c.cyan} strokeWidth="1.3" />
    {candles.map((k, i) => (
      <g key={i} fill={k.up ? "#129a82" : c.down}>
        <rect x={k.x} y={k.high} width="1" height={k.low - k.high} />
        <rect x={k.x - 1} y={Math.min(k.open, k.close)} width="3" height={Math.max(1, Math.abs(k.open - k.close))} />
      </g>
    ))}
    <polyline points={average(5)} fill="none" stroke="#d8bd3a" strokeWidth="1.2" />
    <polyline points={average(10)} fill="none" stroke="#dc941f" strokeWidth="1.2" />
    <polyline points={bbBasis} fill="none" stroke="#e0246b" strokeWidth="3.6" strokeLinejoin="round" />
    <path d="M0 197H1507" stroke="#1aa38c" strokeWidth="2" />
    <path d="M0 384.5H1507" stroke="#b5b5b5" strokeWidth="1" strokeDasharray="2 2" />
    <Note x="788" y="206">저항</Note>
    <Note x="769" y="344">저항</Note>
    <Note x="795" y="464">지지</Note>
  </Drawing>
);

const RsiChart = () => (
  <Drawing viewBox="0 0 1507 80" preserveAspectRatio="none" role="img" aria-label="RSI">
    <path d="M1020 22L1024 12 1034 9 1039 22z" fill="#174a1a" />
    <path d="M289 59L295 71 299 59z" fill="#5a2418" />
    <g strokeDasharray="2 2">
      <path d="M0 22.5H1507M0 59.5H1507" stroke="#d8d8d8" />
      <path d="M0 40.5H1507" stroke="#7a7a7a" />
    </g>
    <polyline points={rsiLine} fill="none" stroke="#4caf50" strokeWidth="1.2" />
  </Drawing>
);

const CciChart = () => (
  <Drawing viewBox="0 0 1507 100" preserveAspectRatio="none" role="img" aria-label="CCI">
    <rect width="1507" height="25" y="35" fill="#020d18" />
    <g strokeDasharray="6 7" fill="none">
      <path d="M0 35.5H1507M0 60.5H1507" stroke="#8b929b" />
      <path d="M0 48.5H1507" stroke="#4b535c" />
    </g>
    <polyline points={cciLine} fill="none" stroke="#f2f2f2" strokeWidth="1.5" />
  </Drawing>
);

const Scale = ({ auto }: { auto?: boolean }) => (
  <ScaleButtons>
    <ScaleButton $on={auto}>A</ScaleButton>
    <ScaleButton>L</ScaleButton>
  </ScaleButtons>
);

/* ---------- regions ---------- */

const tabs = [
  { symbol: "HUSDT", price: "0.079126", change: "+0.82%", coin: <Tether size={22} />, edge: "left" as const },
  { symbol: "BTCUSDT", price: "109,428.5", change: "+1.1", coin: <Pair />, active: true },
  { symbol: "BTCUSD", price: "109,519.19", change: "+1.1", coin: <Bitcoin size={22} />, edge: "right" as const },
];

const Tabs = () => (
  <TabStrip>
    {tabs.map((t) => (
      <Tab key={t.symbol} $active={t.active} $edge={t.edge}>
        {t.coin}
        <TabSymbol>{t.symbol}</TabSymbol>
        <Rise />
        <span>{t.price}</span>
        <TabChange>{t.change}</TabChange>
        <TabClose aria-label={`${t.symbol} 닫기`}>
          <Icon name="close" size={14} />
        </TabClose>
      </Tab>
    ))}
    <StripRest>
      <Rule />
      <StripButton $w={40} aria-label="새 탭">
        <Icon name="plus" size={16} />
      </StripButton>
      <Spacer />
      <StripButton $w={60} aria-label="창 배치">
        <Icon name="boards" />
      </StripButton>
      <Rule />
      <StripButton $w={60} aria-label="더보기">
        <Icon name="more" size={28} />
      </StripButton>
    </StripRest>
  </TabStrip>
);

const favorites = [
  "cross", "brush", "hline", "trend", "fib", "abc", "xabcd", "elliott", "longPos", "shortPos", "rect", "range", "channel",
];

const Header = () => (
  <TopBar>
    <Avatar>
      R
      <Badge $x={21} $y={-3}>11</Badge>
    </Avatar>
    <SearchButton>
      <Icon name="search" size={18} />
      BTCUSD
    </SearchButton>
    <Tool aria-label="심볼 추가">
      <Icon name="plusCircle" />
    </Tool>
    <Rule $l={12} $r={7} />
    <Interval $on>15분</Interval>
    <Interval>4시간</Interval>
    <Interval>날</Interval>
    <Interval>주</Interval>
    <Interval>1시간</Interval>
    <Tool $l={12} aria-label="시간 간격">
      <Icon name="chevDown" size={12} />
    </Tool>
    <Rule $l={13} $r={11} />
    <Tool aria-label="차트 유형">
      <Icon name="candles" />
    </Tool>
    <Rule $l={11} $r={11} />
    <Tool>
      <Icon name="indicators" />
      지표
    </Tool>
    <Tool $l={19} aria-label="지표 즐겨찾기">
      <Icon name="chevDown" size={12} />
    </Tool>
    <Tool $l={14} aria-label="템플릿">
      <Icon name="layouts" />
    </Tool>
    <Rule $l={11} $r={9} />
    <Tool>
      <Icon name="alertAdd" />
      얼러트
    </Tool>
    <Tool $l={19}>
      <Icon name="replay" />
      리플레이
    </Tool>
    <Rule $l={17} $r={10} />
    <Tool aria-label="실행 취소">
      <Icon name="undo" />
    </Tool>
    <Tool $l={11} $dim aria-label="다시 실행">
      <Icon name="redo" />
    </Tool>
    <Spacer />
    <Publish>퍼블리쉬</Publish>
    <Favorites role="toolbar" aria-label="즐겨찾는 그리기 도구">
      <Grip>
        <i /><i /><i /><i /><i /><i />
      </Grip>
      {favorites.map((name) => (
        <FavButton key={name} $on={name === "cross"} aria-label={name}>
          <Icon name={name} />
        </FavButton>
      ))}
    </Favorites>
  </TopBar>
);

const railGroups = [
  ["cross", "trend", "fib", "abc", "range", "brush", "text", "heart"],
  ["ruler", "zoom"],
  ["magnet", "pencilLock", "lock", "eye", "link"],
  ["trash"],
];

const Tools = () => (
  <LeftRail>
    {railGroups.map((group, g) => (
      <React.Fragment key={g}>
        {g > 0 && <RailRule />}
        {group.map((name) => (
          <RailButton
            key={name}
            aria-label={name}
            $look={name === "cross" ? "on" : name === "link" ? "light" : undefined}
          >
            <Icon name={name} />
          </RailButton>
        ))}
      </React.Fragment>
    ))}
    <Spacer />
    <RailButton aria-label="star" $look="light">
      <Icon name="star" />
    </RailButton>
  </LeftRail>
);

const Widgets = () => (
  <RightRail>
    {["watchlist", "alarm", "layers", "chat"].map((n) => (
      <SideButton key={n} aria-label={n}>
        <Icon name={n} />
      </SideButton>
    ))}
    <Spacer />
    <SideButton aria-label="target">
      <Icon name="target" />
    </SideButton>
    <SideButton aria-label="calendar">
      <Icon name="calendar" />
    </SideButton>
    <SideButton $disc aria-label="apps">
      <AppDots>
        <i /><i /><i /><i /><i /><i /><i /><i /><i />
      </AppDots>
    </SideButton>
    <RailRule />
    <SideButton aria-label="rss">
      <Icon name="rss" />
    </SideButton>
    <SideButton aria-label="bell">
      <Icon name="bell" />
      <Badge $x={23} $y={-2}>6</Badge>
    </SideButton>
    <SideButton aria-label="help">
      <Icon name="help" />
    </SideButton>
  </RightRail>
);

const ohlc = [
  ["시", "108,189.2"],
  ["고", "108,207.9"],
  ["저", "108,139.1"],
  ["종", "108,172.6"],
  ["볼륨", "14.8"],
];

const Chart = () => (
  <ChartCard>
    <Panes>
      <Pane>
        <Plot>
          <PriceChart />
          <Legend>
            <LegendRow $big>
              <Pair />
              <SymbolTitle>BTCUSDT · 15 · BYBIT</SymbolTitle>
              <Live />
              <Ohlc>
                {ohlc.map(([k, v]) => (
                  <span key={k}>
                    {k}
                    <Value $color={c.red}>{v}</Value>
                  </span>
                ))}
              </Ohlc>
            </LegendRow>
            <LegendRow>
              <span>볼륨 · BTC</span>
              <Value $color={c.red}>15</Value>
            </LegendRow>
            <LegendRow>
              <span>BB</span>
              <Value $color="#c4205c">108,128.2</Value>
              <Value $color={c.cyan}>108,229.7</Value>
              <Value $color={c.cyan}>108,026.7</Value>
            </LegendRow>
            <LegendRow>
              <span>MA Ribbon</span>
              <Value $color="#f0d850">108,167.1</Value>
              <Value $color="#f5a021">108,141.9</Value>
              <Value $color="#f57c1c">108,128.2</Value>
              <Value $color="#d42a2a">108,646.3</Value>
            </LegendRow>
            <LegendRow>
              <Faint>VPVR</Faint>
              <IconSlot>
                <Icon name="hidden" size={20} />
              </IconSlot>
            </LegendRow>
            <Collapse aria-label="지표 범례 접기">
              <Icon name="chevUp" size={12} />
            </Collapse>
          </Legend>
          <PlusTag aria-label="가격 추가">
            <Icon name="plusCircle" size={24} />
          </PlusTag>
        </Plot>
        <PriceAxis>
          {prices.map((p, i) => (
            <AxisLabel key={i}>{p}</AxisLabel>
          ))}
          <PriceTag $top={125}>
            109,428.5
            <br />
            04:15
          </PriceTag>
          <PriceTag $top={186}>109,098.3</PriceTag>
          <PriceTag $top={373} $bg={c.tip}>108,092.4</PriceTag>
          <Scale />
        </PriceAxis>
      </Pane>
      <Pane $h={81}>
        <Plot>
          <RsiChart />
          <StudyLegend>
            <span>RSI</span>
            <IconSlot $color="#5b2ee0">
              <Icon name="sync" size={19} />
            </IconSlot>
            <Value $color="#4caf50">54.10</Value>
          </StudyLegend>
        </Plot>
        <Axis>
          <StudyLabel $top={3}>80.00</StudyLabel>
          <Scale auto />
        </Axis>
      </Pane>
      <Pane $h={101}>
        <Plot>
          <CciChart />
          <StudyLegend>
            <span>CCI</span>
            <Value $color="#fff">75.76</Value>
          </StudyLegend>
          <Brand viewBox="0 0 37 22" aria-label="TradingView" role="img">
            <path d="M0 1h15v20H8V9H0zM24 21h-8L25 1h11z" fill="#e8e8e8" stroke="#000" />
            <circle cx="20" cy="5" r="4" fill="#e8e8e8" />
          </Brand>
        </Plot>
        <Axis>
          <StudyLabel $top={38}>0.00</StudyLabel>
          <Scale auto />
        </Axis>
      </Pane>
      <TimeRow>
        <TimeLabels>
          {times.map((t, i) => (
            <TimeLabel key={i} $bold={t === "7"}>{t}</TimeLabel>
          ))}
        </TimeLabels>
        <TimeSettings aria-label="시간축 설정">
          <Icon name="hex" size={20} />
        </TimeSettings>
        <TimeTip>
          <span>토 2025-07-05</span>
          <span>23:30</span>
        </TimeTip>
      </TimeRow>
      <CrossV />
      <CornerTools>
        <CornerButton aria-label="아래로">
          <Icon name="arrowDown" size={16} />
        </CornerButton>
        <CornerButton aria-label="최대화">
          <Icon name="maximize" size={15} />
        </CornerButton>
        <Currency>
          <select aria-label="통화" defaultValue="USDT">
            <option>USDT</option>
          </select>
          <Icon name="chevDown" size={8} />
        </Currency>
      </CornerTools>
    </Panes>
    <RangeBar>
      {["1D", "5D", "1M", "3M", "6M", "YTD", "1Y", "전체"].map((r) => (
        <RangeButton key={r}>{r}</RangeButton>
      ))}
      <Rule $l={6} $r={11} />
      <Tool aria-label="날짜로 이동">
        <Icon name="gotoDate" />
      </Tool>
      <Spacer />
      <PanelButton>06:40:44 UTC+9</PanelButton>
    </RangeBar>
  </ChartCard>
);

export default function App() {
  return (
    <>
      <GlobalStyle />
      <Page>
        <Tabs />
        <Header />
        <Body>
          <Tools />
          <Center>
            <Chart />
            <BottomPanel>
              <PanelButton>Pine 에디터</PanelButton>
              <PanelButton>전략테스터</PanelButton>
              <PanelButton>리플레이 트레이딩 패널</PanelButton>
              <PanelButton>트레이딩패널</PanelButton>
              <Spacer />
              <PanelActions>
                <PanelButton aria-label="패널 열기">
                  <Icon name="chevWide" size={22} />
                </PanelButton>
                <PanelButton aria-label="패널 최대화">
                  <Icon name="maximize" size={22} />
                </PanelButton>
              </PanelActions>
            </BottomPanel>
          </Center>
          <Widgets />
        </Body>
      </Page>
    </>
  );
}
